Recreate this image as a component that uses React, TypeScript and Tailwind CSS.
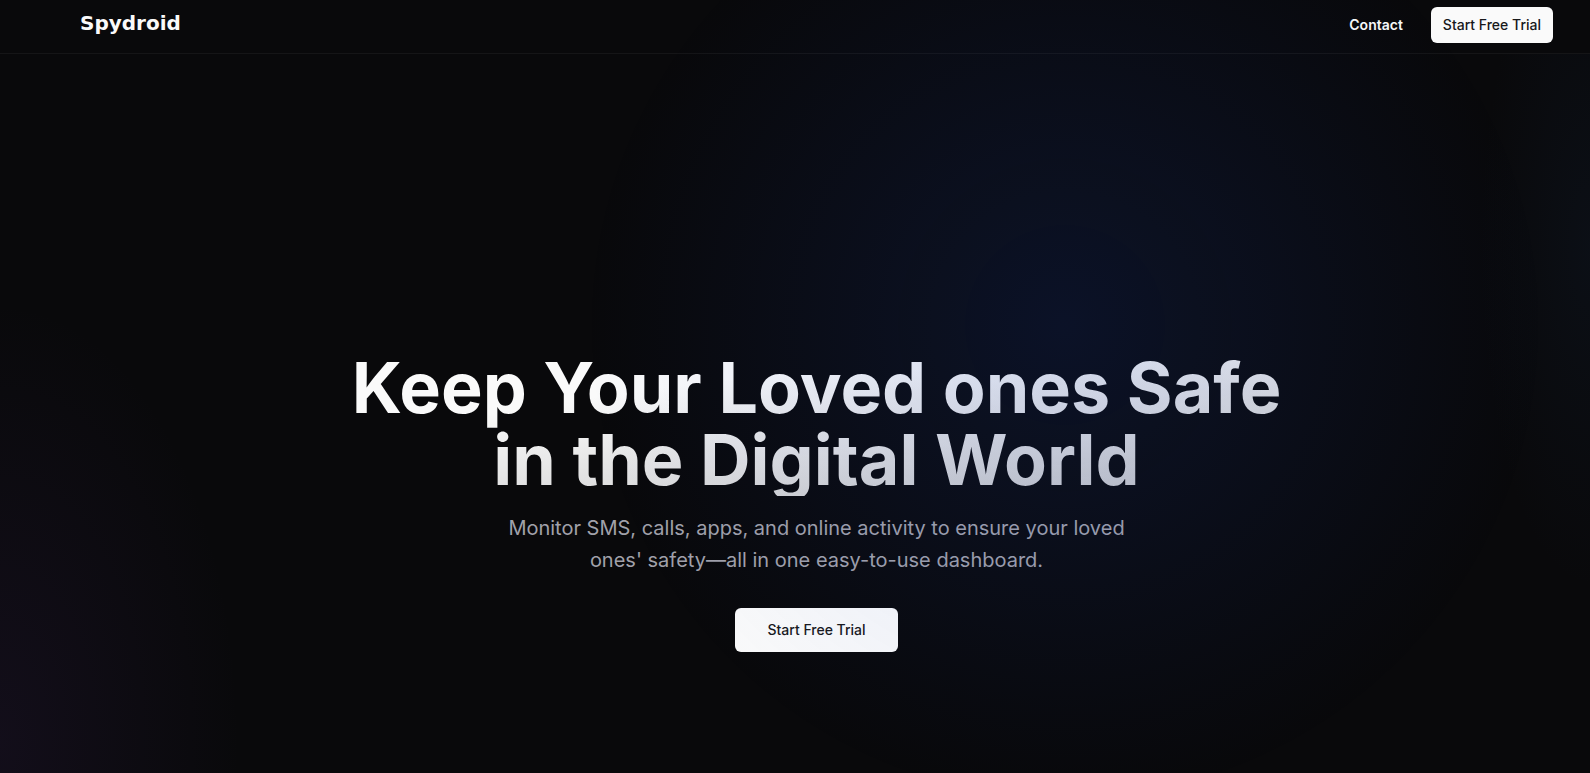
import { useState } from 'react';

const navLinks = [{ label: 'Contact', href: '#contact' }];

function Header() {
  return (
    <header className="relative z-10 border-b border-white/5 bg-[#09090b]">
      <div className="flex items-center justify-between pt-[7px] pr-[37px] pb-[10px] pl-20">
        <a href="#" className="pb-1 font-['DejaVu_Sans'] text-xl leading-7 font-bold text-[#fafafa]">
          Spydroid
        </a>
        <nav className="flex items-center gap-7">
          {navLinks.map((link) => (
            <a key={link.href} href={link.href} className="text-sm font-semibold text-[#fafafa]">
              {link.label}
            </a>
          ))}
          <button
            type="button"
            className="h-9 rounded-md bg-[#fafafa] px-3 text-sm font-medium text-[#18181b]"
          >
            Start Free Trial
          </button>
        </nav>
      </div>
    </header>
  );
}

function Hero() {
  return (
    <section className="flex flex-col items-center pt-[298px] pr-[37px] pl-20 text-center">
      <h1 className="w-full max-w-5xl bg-linear-to-br from-[#fafafa] from-30% to-[#fafafa]/75 bg-clip-text text-[70px] leading-[72px] font-bold text-transparent">
        Keep Your Loved ones Safe
        <br />
        in the Digital World
      </h1>
      <p className="mt-4 max-w-2xl text-xl leading-8 text-[#a1a1aa]">
        Monitor SMS, calls, apps, and online activity to ensure your loved ones' safety—all in one
        easy-to-use dashboard.
      </p>
      <button
        type="button"
        className="mt-8 h-11 rounded-md bg-[#fafafa] px-8 text-sm font-medium text-[#18181b]"
      >
        Start Free Trial
      </button>
    </section>
  );
}

export default function App() {
  const [glow, setGlow] = useState({ x: 1065, y: 325 });

  return (
    <div
      className="relative min-h-screen overflow-hidden bg-[#09090b] bg-[radial-gradient(240px_440px_at_0%_96%,rgba(88,50,135,0.12),transparent),radial-gradient(110px_340px_at_100%_32%,rgba(30,64,110,0.11),transparent)] font-[Inter,sans-serif]"
      onMouseMove={(e) => setGlow({ x: e.clientX, y: e.clientY })}
    >
      <Header />
      <main>
        <Hero />
      </main>
      {/* Spotlight that follows the pointer */}
      <div
        className="pointer-events-none fixed inset-0 z-30"
        style={{
          background: `radial-gradient(600px at ${glow.x}px ${glow.y}px, rgba(29, 78, 216, 0.14), transparent 80%)`,
        }}
      />
    </div>
  );
}
